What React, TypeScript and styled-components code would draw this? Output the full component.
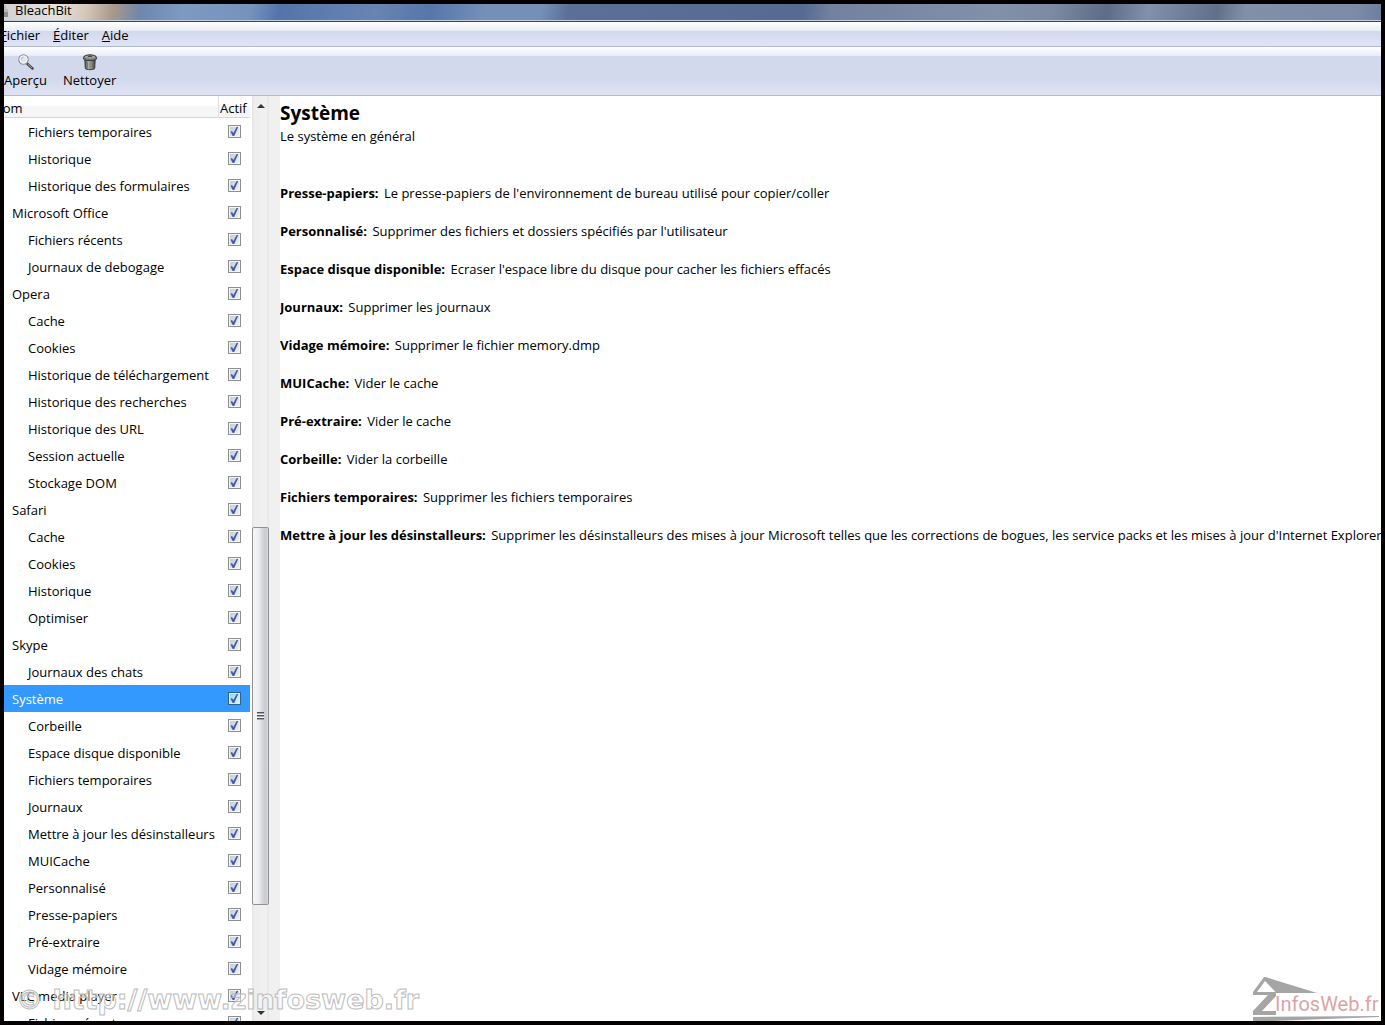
import React, { useState } from "react";
import styled, { createGlobalStyle } from "styled-components";

const GlobalStyle = createGlobalStyle`
  * { box-sizing: border-box; }
  body {
    margin: 0;
    background: #000;
    color: #000;
    font: 13px/18px "Open Sans", "Noto Sans", sans-serif;
  }
`;

const Frame = styled.div`
  position: relative;
  display: flex;
  flex-direction: column;
  height: 100vh;
  border: 4px solid #040000;
  background: #fff;
  overflow: hidden;
`;

const TitleBar = styled.header`
  display: flex;
  align-items: flex-start;
  gap: 6px;
  flex: none;
  height: 18px;
  border-bottom: 1px solid #3b4354;
  box-shadow: inset 0 -1px #c3cde0;
  background:
    linear-gradient(100deg, #d2d2d4 0, #e6e0dc 4%, #d6c8bb 6%, #a9988b 8%, #6d87ad 10%, #7d9ac2 13%,
      #7592bd 18%, #5475aa 20%, #6884b2 27%, #5677a9 31%, #7590b8 35%, #7490b8 39%, #5b7096 41%,
      #566b92 58%, #71819f 60%, #8291aa 72%, #7c8ba3 76%, #5d6c87 80%, #8191ab 83%, #61708a 88%,
      #8090a8 90%, #7c8ca8 98%, #6c7fa0 100%);
`;

const Title = styled.h1`
  margin: 0;
  font-size: 13px;
  line-height: 12px;
  font-weight: 400;
`;

const MenuBar = styled.nav`
  display: flex;
  align-items: center;
  gap: 13px;
  flex: none;
  height: 25px;
  margin-left: -4px;
  padding-top: 2px;
  border-bottom: 1px solid #b1b9cf;
  background: linear-gradient(#fff 0, #e9edf6 36%, #d3d9ec 38%, #dfe4f5 100%);
`;

const MenuButton = styled.button`
  padding: 0;
  border: 0;
  background: none;
  color: inherit;
  font: inherit;

  &::first-letter {
    text-decoration: underline;
  }
`;

const ToolBar = styled.div`
  display: flex;
  gap: 16px;
  flex: none;
  height: 49px;
  border-bottom: 1px solid #b1b9cf;
  background: linear-gradient(#fff 0, #e9edf6 18%, #d3d9ec 19%, #d3d9ec 66%, #dfe4f5 100%);
`;

const ToolButton = styled.button`
  display: flex;
  flex-direction: column;
  align-items: center;
  padding: 7px 0 0;
  border: 0;
  background: none;
  color: inherit;
  font: inherit;
`;

const Body = styled.main`
  display: grid;
  grid-template-columns: 248px 17px 11px minmax(0, 1fr);
  flex: 1;
  min-height: 0;
`;

const TreePane = styled.div`
  min-height: 0;
  padding-right: 2px;
  overflow: hidden;
`;

const Tree = styled.table`
  width: 100%;
  border-collapse: separate;
  border-spacing: 0;
  table-layout: fixed;
`;

const NameHead = styled.th`
  height: 22px;
  padding: 2px 0 0;
  border-bottom: 1px solid #d5d5d5;
  background: linear-gradient(#fff 45%, #f5f6f8 46%);
  font-weight: 400;
  text-align: left;
  text-indent: -11px;
`;

const ActiveHead = styled(NameHead)`
  width: 32px;
  border-left: 1px solid #dfe1e4;
  text-indent: 1px;
`;

const Row = styled.tr<{ $selected: boolean }>`
  height: 27px;
  background: ${(p) => (p.$selected ? "#3399ff" : "transparent")};
  color: ${(p) => (p.$selected ? "#fff" : "inherit")};
`;

const NameCell = styled.td<{ $child: boolean }>`
  padding: 0 0 0 ${(p) => (p.$child ? 24 : 8)}px;
  white-space: nowrap;
`;

const CheckCell = styled.td`
  padding: 0;
  text-align: center;
`;

const Check = styled.input<{ $selected: boolean }>`
  appearance: none;
  display: block;
  width: 13px;
  height: 13px;
  margin: 0 auto;
  border: 1px solid ${(p) => (p.$selected ? "#2c628b" : "#8e8f8f")};
  box-shadow: inset 0 0 0 1px ${(p) => (p.$selected ? "#d3effc" : "#f4f4f4")};
  background: ${(p) =>
    p.$selected
      ? "linear-gradient(135deg, #8fd0f3, #e6f7ff)"
      : "linear-gradient(135deg, #c2c8d2, #f4f5f6)"};

  &:checked::after {
    content: "";
    display: block;
    width: 11px;
    height: 11px;
    background: #415ba6;
    clip-path: polygon(18% 52%, 32% 46%, 44% 64%, 74% 10%, 88% 10%, 52% 90%, 38% 90%);
  }
`;

const ScrollBar = styled.div`
  display: grid;
  grid-template-rows: 17px 414fr 378fr 99fr 17px;
  min-height: 0;
  background: linear-gradient(90deg, #e4e4e4, #eee 15%, #f0f0f0 85%, #e6e6e6);
`;

const ArrowButton = styled.button<{ $down?: boolean }>`
  grid-row: ${(p) => (p.$down ? 5 : 1)};
  display: grid;
  place-items: center;
  padding: ${(p) => (p.$down ? 0 : 2)}px 0 0;
  border: 0;
  background: none;

  &::before {
    content: "";
    border: 4px solid transparent;
    border-top-width: ${(p) => (p.$down ? 4 : 0)}px;
    border-bottom-width: ${(p) => (p.$down ? 0 : 4)}px;
    border-top-color: #333;
    border-bottom-color: #333;
  }
`;

const Thumb = styled.div`
  grid-row: 3;
  display: grid;
  place-items: center;
  border: 1px solid #8f9094;
  border-radius: 2px;
  background: linear-gradient(90deg, #f7f7f8 0, #ececee 40%, #dcdde0 55%, #c8cacf 85%, #dcdde1 100%);

  &::before {
    content: "";
    width: 7px;
    height: 8px;
    background: repeating-linear-gradient(#4d5159 0 1px, #a4a7ae 1px 2px, #f3f3f3 2px 3px);
  }
`;

const Splitter = styled.div`
  background: #f0f0f0;
`;

const Detail = styled.section`
  padding-top: 3px;
  overflow: hidden;
  white-space: nowrap;
`;

const Heading = styled.h2`
  margin: 0;
  font-size: 19px;
  line-height: 28px;
  font-weight: 700;
`;

const Summary = styled.p`
  margin: 0 0 39px;
`;

const Option = styled.p`
  margin: 0 0 20px;
`;

const OptionName = styled.b`
  margin-right: 2px;
`;

const Watermark = styled.div`
  position: absolute;
  left: 12px;
  bottom: 4px;
  color: rgba(255, 255, 255, 0.4);
  font: 700 27px/34px "DejaVu Sans", sans-serif;
  white-space: nowrap;
  -webkit-text-stroke: 1px #bcbcbc;
  pointer-events: none;
`;

const Logo = styled.div`
  position: absolute;
  right: 0;
  bottom: 0;
  width: 128px;
  height: 44px;
  pointer-events: none;

  svg {
    display: block;
  }
`;

const LogoName = styled.span`
  position: absolute;
  left: 22px;
  bottom: 5px;
  color: #dba4a4;
  font: 400 20px/24px Roboto, sans-serif;
`;

const items: [string, boolean][] = [
  ["Fichiers temporaires", true],
  ["Historique", true],
  ["Historique des formulaires", true],
  ["Microsoft Office", false],
  ["Fichiers récents", true],
  ["Journaux de debogage", true],
  ["Opera", false],
  ["Cache", true],
  ["Cookies", true],
  ["Historique de téléchargement", true],
  ["Historique des recherches", true],
  ["Historique des URL", true],
  ["Session actuelle", true],
  ["Stockage DOM", true],
  ["Safari", false],
  ["Cache", true],
  ["Cookies", true],
  ["Historique", true],
  ["Optimiser", true],
  ["Skype", false],
  ["Journaux des chats", true],
  ["Système", false],
  ["Corbeille", true],
  ["Espace disque disponible", true],
  ["Fichiers temporaires", true],
  ["Journaux", true],
  ["Mettre à jour les désinstalleurs", true],
  ["MUICache", true],
  ["Personnalisé", true],
  ["Presse-papiers", true],
  ["Pré-extraire", true],
  ["Vidage mémoire", true],
  ["VLC media player", false],
  ["Fichiers récents", true],
];

const options: [string, string][] = [
  ["Presse-papiers:", "Le presse-papiers de l'environnement de bureau utilisé pour copier/coller"],
  ["Personnalisé:", "Supprimer des fichiers et dossiers spécifiés par l'utilisateur"],
  ["Espace disque disponible:", "Ecraser l'espace libre du disque pour cacher les fichiers effacés"],
  ["Journaux:", "Supprimer les journaux"],
  ["Vidage mémoire:", "Supprimer le fichier memory.dmp"],
  ["MUICache:", "Vider le cache"],
  ["Pré-extraire:", "Vider le cache"],
  ["Corbeille:", "Vider la corbeille"],
  ["Fichiers temporaires:", "Supprimer les fichiers temporaires"],
  [
    "Mettre à jour les désinstalleurs:",
    "Supprimer les désinstalleurs des mises à jour Microsoft telles que les corrections de bogues, les service packs et les mises à jour d'Internet Explorer",
  ],
];

const AppIcon = () => (
  <svg width="5" height="14" viewBox="0 0 5 14" aria-hidden="true">
    <path d="M0 1h2v4h2v8H0z" fill="#b9b9b9" />
    <path d="M0 8h4v5H0z" fill="#8f8f8f" />
  </svg>
);

const LensIcon = () => (
  <svg width="16" height="17" viewBox="0 0 16 17" aria-hidden="true">
    <path d="M9.500 10l5 4.500" stroke="#4c4c4c" strokeWidth="2.600" strokeLinecap="round" />
    <path d="M10 10.200l4 3.800" stroke="#a5a5a5" strokeWidth="0.900" />
    <circle cx="5.500" cy="5.500" r="4.700" fill="#dfe5f2" stroke="#8a8d90" strokeWidth="1.100" />
    <circle cx="5.500" cy="5.500" r="3.600" fill="none" stroke="#f6f7fa" strokeWidth="1" />
    <path d="M3.200 6a2.600 2.600 0 0 1 2.600-2.800" stroke="#aab3c4" strokeWidth="0.900" fill="none" />
  </svg>
);

const BinIcon = () => (
  <svg width="16" height="17" viewBox="0 0 16 17" aria-hidden="true">
    <defs>
      <linearGradient id="bin">
        <stop offset="0" stopColor="#4d4f4b" />
        <stop offset="0.4" stopColor="#b4b6b0" />
        <stop offset="1" stopColor="#454743" />
      </linearGradient>
    </defs>
    <path d="M2.800 5h10.400l-0.500 9.500c-1 1.500-8.400 1.500-9.400 0z" fill="url(#bin)" stroke="#2e302d" strokeWidth="0.900" />
    <path d="M5.500 8v6M8 8v6.500M10.500 8v6" stroke="#6a6c67" strokeWidth="0.600" />
    <path d="M1.500 3.500c0-3.600 13-3.600 13 0v1.500c-1 2.200-12 2.200-13 0z" fill="#74766f" stroke="#2e302d" strokeWidth="0.900" />
    <ellipse cx="8" cy="3" rx="5" ry="1.500" fill="#a3a59f" />
    <path d="M6 3.200c0-1.400 4-1.400 4 0" stroke="#222" strokeWidth="1" fill="none" />
  </svg>
);

export default function App() {
  const [checked, setChecked] = useState<boolean[]>(() => items.map(() => true));
  const toggle = (index: number) =>
    setChecked((list) => list.map((value, i) => (i === index ? !value : value)));

  return (
    <>
      <GlobalStyle />
      <Frame>
        <TitleBar>
          <AppIcon />
          <Title>BleachBit</Title>
        </TitleBar>
        <MenuBar>
          <MenuButton>Fichier</MenuButton>
          <MenuButton>Éditer</MenuButton>
          <MenuButton>Aide</MenuButton>
        </MenuBar>
        <ToolBar>
          <ToolButton>
            <LensIcon />
            Aperçu
          </ToolButton>
          <ToolButton>
            <BinIcon />
            Nettoyer
          </ToolButton>
        </ToolBar>
        <Body>
          <TreePane>
            <Tree>
              <thead>
                <tr>
                  <NameHead>Nom</NameHead>
                  <ActiveHead>Actif</ActiveHead>
                </tr>
              </thead>
              <tbody>
                {items.map(([name, child], i) => (
                  <Row key={i} $selected={name === "Système"}>
                    <NameCell $child={child}>
                      <label htmlFor={`item-${i}`}>{name}</label>
                    </NameCell>
                    <CheckCell>
                      <Check
                        id={`item-${i}`}
                        type="checkbox"
                        $selected={name === "Système"}
                        checked={checked[i]}
                        onChange={() => toggle(i)}
                      />
                    </CheckCell>
                  </Row>
                ))}
              </tbody>
            </Tree>
          </TreePane>
          <ScrollBar>
            <ArrowButton aria-label="Défiler vers le haut" />
            <Thumb />
            <ArrowButton $down aria-label="Défiler vers le bas" />
          </ScrollBar>
          <Splitter />
          <Detail>
            <Heading>Système</Heading>
            <Summary>Le système en général</Summary>
            {options.map(([name, text]) => (
              <Option key={name}>
                <OptionName>{name}</OptionName> {text}
              </Option>
            ))}
          </Detail>
        </Body>
        <Watermark>© http://www.zinfosweb.fr</Watermark>
        <Logo>
          <svg width="128" height="44" viewBox="0 0 128 44" aria-hidden="true">
            <path
              d="M12.500 0L64 16H23V19L9 34H23V38H0V34L15 18H0V15L11 0zM12 4L4 15H22.500z"
              fillRule="evenodd"
              fill="#a5a5a5"
            />
            <path d="M0 40L126 39V40L20 44H0z" fill="#a5a5a5" />
          </svg>
          <LogoName>InfosWeb.fr</LogoName>
        </Logo>
      </Frame>
    </>
  );
}
